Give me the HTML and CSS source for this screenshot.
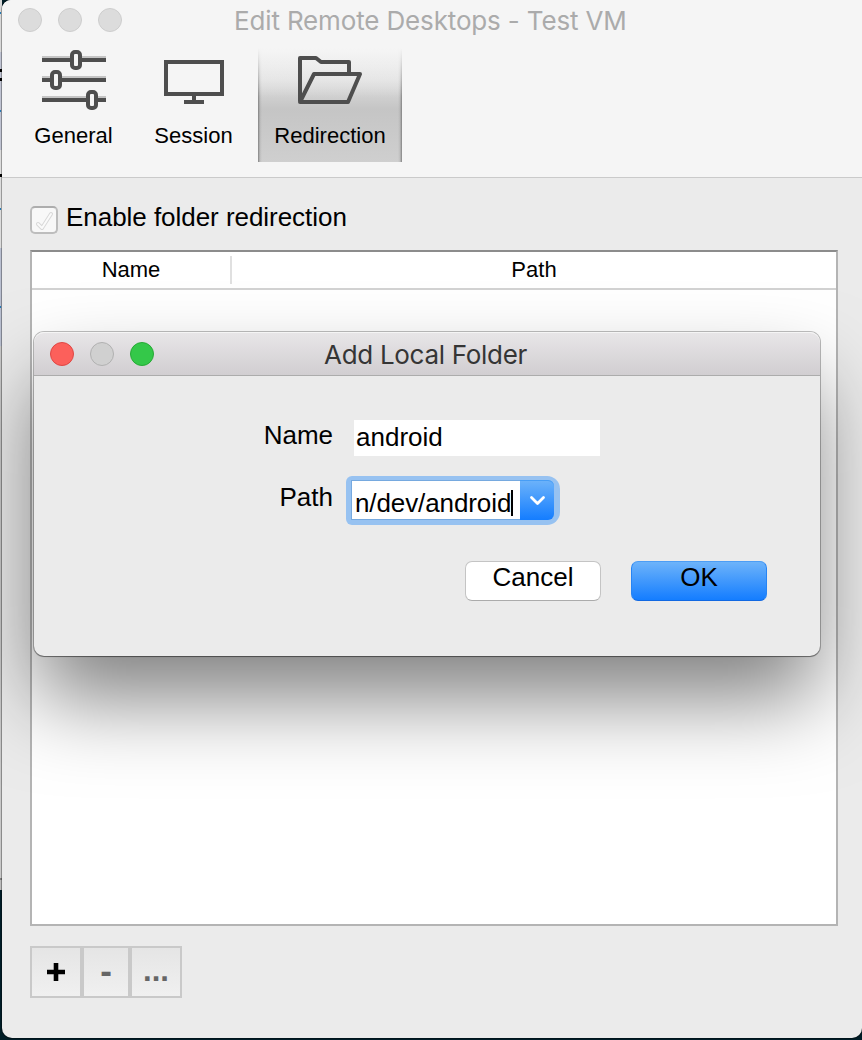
FILE: index.html
```html
<!DOCTYPE html>
<html lang="en">
<head>
<meta charset="utf-8">
<title>Edit Remote Desktops - Test VM</title>
<link rel="stylesheet" href="styles.css">
</head>
<body>
<div class="desktop">
  <div class="backdrop">
    <i class="mark blue m1"></i><i class="mark black m2"></i><i class="mark black m3"></i><i class="mark blue m4"></i><i class="mark black m5"></i><i class="mark blue m6"></i><i class="mark blue m7"></i>
  </div>
  <main class="window">
    <header class="header">
      <div class="titlebar">
        <div class="lights"><span class="light"></span><span class="light"></span><span class="light"></span></div>
        <h1 class="title"><span class="title-text">Edit Remote Desktops - Test VM</span></h1>
      </div>
      <nav class="toolbar">
        <div class="tab general">
          <svg class="tab-icon" width="64" height="64" viewBox="0 0 64 64" fill="none">
            <path d="M0 9H64M0 29H64M0 49H64" stroke="#c4c4c4" stroke-width="2"/>
            <path d="M0 12H64M0 32H64M0 52H64" stroke="#4e4e4e" stroke-width="4"/>
            <rect x="30" y="4" width="8" height="16" rx="3" fill="#f5f5f5" stroke="#4e4e4e" stroke-width="4"/>
            <rect x="10" y="24" width="8" height="16" rx="3" fill="#f5f5f5" stroke="#4e4e4e" stroke-width="4"/>
            <rect x="46" y="44" width="8" height="16" rx="3" fill="#f5f5f5" stroke="#4e4e4e" stroke-width="4"/>
          </svg>
          <span class="tab-label">General</span>
        </div>
        <div class="tab session">
          <svg class="tab-icon" width="64" height="64" viewBox="0 0 64 64" fill="none" stroke="#4e4e4e" stroke-width="4">
            <path d="M4 14H60V46H4ZM32 46V52M22 54H42"/>
          </svg>
          <span class="tab-label">Session</span>
        </div>
        <div class="tab redirection">
          <svg class="tab-icon" width="66" height="64" viewBox="0 0 66 64" fill="none" stroke="#4e4e4e" stroke-width="4" stroke-linejoin="round">
            <path d="M3 53V10H19L24 14H52V25"/>
            <path d="M3 54L17 26H63L51 54Z"/>
          </svg>
          <span class="tab-label">Redirection</span>
        </div>
      </nav>
    </header>
    <section class="content">
      <label class="enable">
        <span class="checkbox"><svg width="24" height="24" viewBox="0 0 24 24" fill="none" stroke-linecap="round" stroke-linejoin="round"><path d="M6 16L10 20L19 6" stroke="#d8d8d8" stroke-width="4"/><path d="M6 16L10 20L19 6" stroke="#fafafa" stroke-width="2"/></svg></span>
        <span class="enable-text">Enable folder redirection</span>
      </label>
      <div class="table">
        <div class="thead"><span class="th name">Name</span><span class="th path">Path</span></div>
      </div>
      <div class="actions">
        <button class="action add"><svg width="18" height="18" viewBox="0 0 18 18"><path d="M9 0V18M0 9H18" stroke="#000" stroke-width="4.6"/></svg></button>
        <button class="action remove"><span>-</span></button>
        <button class="action more"><span>...</span></button>
      </div>
    </section>
  </main>
  <section class="dialog">
    <header class="dialog-bar">
      <div class="lights"><span class="light close"></span><span class="light idle"></span><span class="light grow"></span></div>
      <h2 class="dialog-title"><span class="dialog-title-text">Add Local Folder</span></h2>
    </header>
    <div class="form">
      <div class="row"><span class="label">Name</span><div class="field">android</div></div>
      <div class="row path-row"><span class="label">Path</span>
        <div class="combo"><div class="combo-text"><span class="value">n/dev/android</span><i class="caret"></i></div>
          <div class="combo-button"><svg width="17" height="11" viewBox="0 0 17 11" fill="none" stroke="#fff" stroke-width="2.8" stroke-linecap="round" stroke-linejoin="round"><path d="M2.5 2.5L8.5 8.5L14.5 2.5"/></svg></div>
        </div>
      </div>
      <div class="buttons"><button class="btn">Cancel</button><button class="btn primary">OK</button></div>
    </div>
  </section>
</div>
</body>
</html>
```

FILE: styles.css
```css
* { box-sizing: border-box; }
body { margin: 0; font-family: "Liberation Sans", Arial, sans-serif; color: #000; }
h1, h2 { margin: 0; font-weight: 400; }
button { font: inherit; color: inherit; margin: 0; padding: 0; }
.desktop { position: relative; width: 862px; height: 1040px; overflow: hidden; padding: 0 0 2px 2px; background: #001d27; }
.backdrop { position: absolute; left: 0; top: 0; width: 2px; height: 890px; background: linear-gradient(#d8d8d8 0 52px, #bfc3d2 52px 150px, #dcdcdc 150px 248px, #b9bfd0 248px 346px, #c8c8c8 346px 878px, #808080 878px 880px, #bbb 880px); }
.mark { position: absolute; left: 0; width: 2px; height: 3px; }
.blue { background: #267bb5; width: 1px; height: 2px; }
.black { background: #000; }
.m1 { top: 12px; } .m2 { top: 69px; } .m3 { top: 78px; } .m4 { top: 110px; } .m5 { top: 174px; } .m6 { top: 208px; } .m7 { top: 306px; }
.window { position: relative; height: 1038px; border-radius: 9px 0 10px 10px; overflow: hidden; background: #ebebeb; box-shadow: 0 0 0 1px rgba(0,0,0,.3); }
.header { height: 178px; background: #f5f5f5; border-bottom: 1px solid #cacaca; }
.titlebar { display: flex; height: 44px; padding: 8px 0 0 16px; }
.lights { display: flex; gap: 16px; }
.light { width: 24px; height: 24px; border: 1px solid #cdcdcd; border-radius: 50%; background: #dcdcdc; }
.title { margin-left: 112px; font: 400 26px/26px Inter, sans-serif; color: #ababab; white-space: nowrap; }
.title-text { display: inline-block; letter-spacing: -.15px; }
.toolbar { display: flex; padding-left: 10px; height: 118px; }
.tab { display: flex; flex-direction: column; align-items: center; padding-top: 4px; }
.general { width: 123px; }
.session { width: 117px; }
.redirection { width: 144px; margin-left: 6px; background: linear-gradient(#f5f5f5 4px, rgba(245,245,245,0) 45%), linear-gradient(90deg, rgba(90,90,90,.65), rgba(130,130,130,.2) 2px, transparent 4px 140px, rgba(130,130,130,.2) 142px, rgba(90,90,90,.65)), linear-gradient(#e4e4e4, #dedede 30%, #c5c5c5 55%, #cfcfcf); }
.tab-label { margin-top: 11px; font-size: 22px; line-height: 26px; }
.content { padding: 23px 25px 0 28px; }
.enable { display: flex; align-items: flex-start; gap: 8px; height: 49px; }
.checkbox { width: 28px; height: 28px; margin-top: 5px; border: 2px solid #bdbdbd; border-top-color: #adadad; border-radius: 5px; background: #f8f8f8; }
.checkbox svg { display: block; }
.enable-text { font-size: 26px; line-height: 32px; letter-spacing: -.04px; }
.table { width: 808px; height: 676px; border: 2px solid #b4b4b4; border-top-color: #8c8c8c; background: #fff; }
.thead { display: flex; height: 38px; border-bottom: 2px solid #d2d2d2; }
.th { font-size: 22px; line-height: 36px; text-align: center; }
.name { width: 198px; }
.path { flex: 1; margin-top: 4px; height: 28px; line-height: 28px; border-left: 2px solid #e0e0e0; }
.actions { display: flex; width: 152px; height: 52px; margin-top: 20px; border: 2px solid #c9c9c9; background: linear-gradient(#e5e5e5, #f0f0f0); }
.action { display: flex; align-items: center; justify-content: center; border: 0; background: none; width: 48px; font-weight: 700; color: #666; font-size: 35px; padding-bottom: 2px; }
.add { padding-bottom: 0; }
.remove { width: 52px; border-left: 4px solid #c9c9c9; border-right: 4px solid #c9c9c9; }
.more { font-size: 31px; padding-bottom: 3px; }
.dialog { position: absolute; left: 34px; top: 332px; width: 786px; height: 324px; border-radius: 10px; background: #ebebeb; box-shadow: 0 0 0 1px rgba(0,0,0,.25), 0 1px 1px rgba(0,0,0,.3), 0 46px 84px -4px rgba(0,0,0,.5); }
.dialog-bar { display: flex; height: 44px; padding: 10px 16px 0; border-radius: 10px 10px 0 0; border-bottom: 1px solid #acacac; background: linear-gradient(#e8e6e8, #d1ced1); box-shadow: inset 0 1px #f5f5f5; }
.close { background: #fc605b; border-color: #df4744; }
.idle { background: #d0d0d0; border-color: #b1b1b1; }
.grow { background: #34c849; border-color: #27aa35; }
.dialog-title { margin-left: 170px; font: 400 26px/26px Inter, sans-serif; color: #353535; white-space: nowrap; }
.dialog-title-text { display: inline-block; letter-spacing: -.3px; }
.form { display: flex; flex-direction: column; padding-top: 44px; font-size: 26px; }
.row { display: flex; height: 56px; }
.label { width: 299px; text-align: right; line-height: 30px; }
.field { width: 246px; height: 36px; margin-left: 21px; padding-left: 2px; line-height: 34px; background: #fff; }
.path-row { height: 85px; }
.path-row .label { padding-top: 6px; }
.combo { display: flex; width: 214px; height: 49px; margin-left: 13px; padding: 4px 6px 5px 5px; background: #97c2f1; border-radius: 6px 13px 13px 6px; }
.combo-text { display: flex; align-items: center; width: 169px; padding: 6px 0 0 3px; border: 1px solid #76a9df; border-right: 0; background: #fff; }
.value { line-height: 28px; white-space: nowrap; letter-spacing: -.1px; }
.caret { width: 2px; height: 26px; background: #000; }
.combo-button { display: flex; align-items: center; justify-content: center; flex: 1; border-radius: 0 6px 6px 0; background: linear-gradient(#6db3fa, #147dff); box-shadow: inset 0 1px #479df5; }
.buttons { display: flex; gap: 30px; padding-left: 431px; }
.btn { width: 136px; height: 40px; padding-bottom: 8px; border: 1px solid #c4c4c4; border-bottom-color: #ababab; border-radius: 7px; background: #fff; line-height: 30px; }
.primary { border-color: #4c9df5 #2684f4 #1168e2; background: linear-gradient(#6db3fa, #147dff); }
```
